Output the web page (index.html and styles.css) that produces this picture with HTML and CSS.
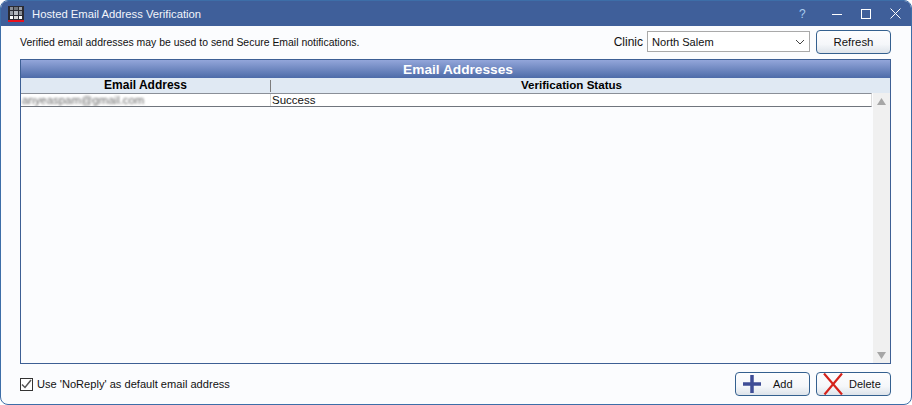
FILE: index.html
```html
<!DOCTYPE html>
<html lang="en">
<head>
<meta charset="utf-8">
<title>Hosted Email Address Verification</title>
<link rel="stylesheet" href="styles.css">
</head>
<body>
<div class="window">
  <header class="titlebar">
    <svg class="app-icon" width="16" height="16" viewBox="0 0 16 16">
      <rect x="0" y="0" width="16" height="16" fill="#2b2b33"/>
      <rect x="2" y="1" width="3" height="3" fill="#8a8f98"/><rect x="6" y="1" width="4" height="3" fill="#6f747c"/><rect x="11" y="1" width="3" height="3" fill="#9a9ea6"/>
      <rect x="2" y="5" width="3" height="4" fill="#9a9ea6"/><rect x="6" y="5" width="4" height="4" fill="#b9bcc2"/><rect x="11" y="5" width="3" height="4" fill="#8a8f98"/>
      <rect x="2" y="10" width="3" height="3" fill="#fff"/><rect x="6" y="10" width="4" height="3" fill="#d8d8d8"/><rect x="11" y="10" width="3" height="3" fill="#fff"/>
      <rect x="0" y="14" width="16" height="2" fill="#e8101c"/>
    </svg>
    <span class="title-text">Hosted Email Address Verification</span>
    <span class="help">?</span>
    <svg class="ctl ctl-min" width="10" height="10" viewBox="0 0 10 10"><path d="M0 5.5H10" stroke="#fff" fill="none"/></svg>
    <svg class="ctl ctl-max" width="10" height="10" viewBox="0 0 10 10"><rect x=".5" y=".5" width="9" height="9" stroke="#fff" fill="none"/></svg>
    <svg class="ctl ctl-close" width="11" height="11" viewBox="0 0 11 11"><path d="M.5 .5L10.500 10.500M10.500 .5L.5 10.500" stroke="#fff" fill="none"/></svg>
  </header>
  <main class="content">
    <div class="toprow">
      <span class="intro">Verified email addresses may be used to send Secure Email notifications.</span>
      <span class="clinic-label">Clinic</span>
      <div class="combo">
        <span>North Salem</span>
        <svg width="10" height="6" viewBox="0 0 10 6"><path d="M1 1L5 5L9 1" stroke="#444" fill="none"/></svg>
      </div>
      <button class="btn btn-refresh">Refresh</button>
    </div>
    <section class="grid">
      <div class="grid-title">Email Addresses</div>
      <div class="grid-head">
        <div class="col-email">Email Address</div>
        <div class="col-status">Verification Status</div>
      </div>
      <div class="grid-main">
        <div class="rows">
          <div class="row">
            <div class="cell-email"><span class="blurred">anyeaspam@gmail.com</span></div>
            <div class="cell-status">Success</div>
          </div>
        </div>
        <div class="scrollbar">
          <svg width="9" height="7" viewBox="0 0 9 7"><path d="M4.500 0L9 7H0Z" fill="#a6a6a6"/></svg>
          <svg width="9" height="7" viewBox="0 0 9 7"><path d="M0 0H9L4.500 7Z" fill="#a6a6a6"/></svg>
        </div>
      </div>
    </section>
    <div class="bottomrow">
      <span class="checkbox">
        <svg width="11" height="10" viewBox="0 0 11 10"><path d="M1 5.500L4 8.500L10 1" stroke="#555" stroke-width="1.500" fill="none"/></svg>
      </span>
      <span class="check-label">Use 'NoReply' as default email address</span>
      <button class="btn btn-icon btn-add">
        <svg width="18" height="18" viewBox="0 0 18 18"><path d="M0 9H18M9 0V18" stroke="#3f4d96" stroke-width="3.500" fill="none"/></svg>
        <span>Add</span>
      </button>
      <button class="btn btn-icon btn-delete">
        <svg width="20" height="22" viewBox="0 0 20 22"><path d="M1 .5L19 21.500M19 .5L1.500 21.500" stroke="#d5231c" stroke-width="2.200" fill="none"/></svg>
        <span>Delete</span>
      </button>
    </div>
  </main>
</div>
</body>
</html>
```
FILE: styles.css
```css
* { box-sizing: border-box; }
html, body { margin: 0; padding: 0; background: #fff; }
body { font-family: "Liberation Sans", Arial, sans-serif; font-size: 10.450px; color: #111; }
.window {
  width: 912px; height: 405px;
  display: flex; flex-direction: column;
  background: #fbfcfe;
  border: 1px solid #3d6ea8;
  border-radius: 8px;
  overflow: hidden;
}
.titlebar {
  height: 25px; flex: none;
  background: #3f5f9a;
  color: #f2f5fa;
  display: flex; align-items: center;
  padding-left: 7px;
}
.app-icon { flex: none; }
.title-text { margin-left: 8px; font-size: 11.270px; flex: 1; }
.help { color: #a9cdf0; font-size: 12px; width: 10px; margin-right: 23px; }
.ctl { flex: none; }
.ctl-min { margin-right: 19px; }
.ctl-max { margin-right: 19px; }
.ctl-close { margin-right: 10px; }
.content { flex: 1; display: flex; flex-direction: column; padding: 0 20px 0 19px; min-height: 0; }
.toprow { height: 33px; display: flex; align-items: center; padding-bottom: 2px; }
.intro { flex: 1; padding-top: 2px; }
.clinic-label { margin-right: 4px; font-size: 12px; padding-top: 1px; }
.combo {
  width: 163px; height: 21px;
  border: 1px solid #a9a9a9; background: #fff;
  display: flex; align-items: center; justify-content: space-between;
  padding: 1px 4px 0; margin-right: 6px; font-size: 11.100px;
}
.btn {
  font: inherit; color: #111;
  border: 1px solid #34608f; border-radius: 4px;
  background: linear-gradient(#fdfdfe, #f5f7fa 60%, #dde3ea);
  padding: 0; font-size: 11.400px;
}
.btn-refresh { width: 75px; height: 24px; }
.grid { flex: 1; display: flex; flex-direction: column; border: 1px solid #3d5f94; min-height: 0; background: #fbfcfe; }
.grid-title {
  height: 18px; flex: none;
  background: linear-gradient(#93a6da, #4d6ba8);
  color: #fff; font-weight: bold; font-size: 13.700px;
  text-align: center; line-height: 19px; padding-left: 5px;
}
.grid-head { height: 15px; flex: none; display: flex; background: #e0e9f3; font-weight: bold; font-size: 12px; line-height: 15px; color: #000; text-align: center; }
.col-email { width: 250px; border-right: 1px solid #7d7d7d; margin: 2px 0 1px; line-height: 11px; }
.col-status { flex: 1; padding-right: 18px; font-size: 11.600px; line-height: 14px; }
.grid-main { flex: 1; display: flex; min-height: 0; }
.rows { flex: 1; padding-right: 1px; }
.row { height: 14px; display: flex; background: #fff; border-top: 1px solid #8a8f98; border-bottom: 1px solid #70757d; border-right: 1px solid #dcdcdc; line-height: 13px; font-size: 11.500px; }
.cell-email { width: 250px; border-right: 1px solid #d6d6d6; padding-left: 1px; overflow: hidden; }
.blurred { filter: blur(1.200px); color: #666; display: inline-block; font-size: 11.400px; }
.cell-status { padding-left: 1px; }
.scrollbar { width: 17px; flex: none; background: #f0f0f0; display: flex; flex-direction: column; justify-content: space-between; align-items: center; padding: 5px 0 4px; }
.bottomrow { height: 40px; flex: none; display: flex; align-items: center; }
.checkbox { width: 13px; height: 13px; border: 1px solid #333; background: #fff; display: flex; align-items: center; justify-content: center; margin-right: 4px; }
.check-label { flex: 1; font-size: 11.100px; }
.btn-icon { height: 24px; width: 75px; display: flex; align-items: center; font-size: 11px; }
.btn-add { margin-right: 6px; padding-left: 7px; }
.btn-add span { margin-left: 12px; }
.btn-delete { padding-left: 6px; }
.btn-delete span { margin-left: 6px; }
```
